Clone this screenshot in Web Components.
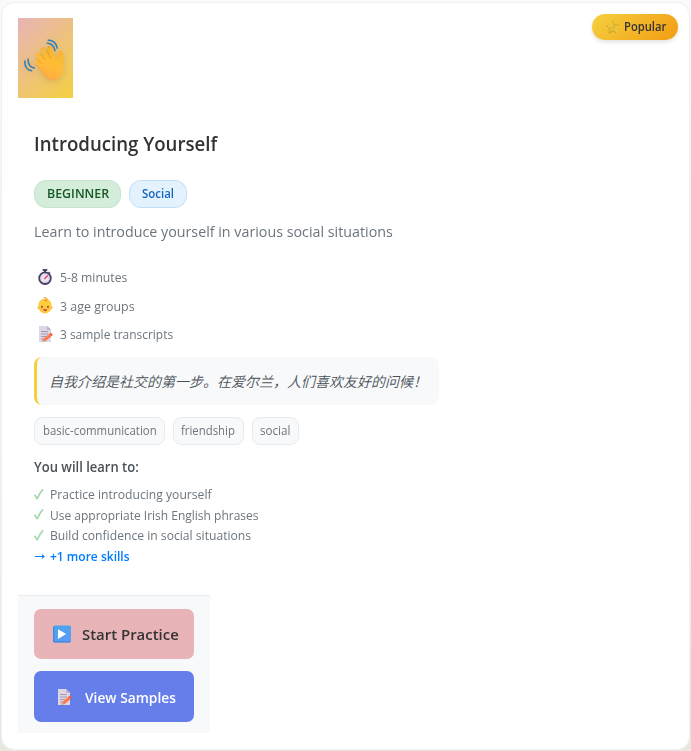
<!DOCTYPE html>
<html lang="en">
<head>
<meta charset="utf-8">
<title>Introducing Yourself</title>
<style>
html,body{margin:0;height:751px;overflow:hidden}
body{background:linear-gradient(#fafafa 0,#f7f5f2 25%,#f1eeea 75%,#e9e6e0 100%);font-family:"Open Sans","Noto Sans CJK SC",sans-serif;color:#6c757d}
</style>
</head>
<body>
<scenario-card></scenario-card>
<script>
/* Single-line label whose text is scaled horizontally to an exact width. */
class FitText extends HTMLElement {
  connectedCallback() {
    const w = +this.getAttribute('w');
    this.attachShadow({mode: 'open'}).innerHTML = `<style>
      :host{display:inline-block;white-space:nowrap;flex:none;width:${w}px}
      span{display:inline-block;transform-origin:0 50%}</style><span><slot></slot></span>`;
    const s = this.shadowRoot.querySelector('span');
    s.style.transform = `scaleX(${w / s.offsetWidth})`;
  }
}

const ICONS = {
  wave: [40, 42, `<defs><linearGradient id="g" x1=".7" y1="0" x2=".4" y2="1"><stop offset="0" stop-color="#f5b52e"/><stop offset=".5" stop-color="#ffbd35"/><stop offset="1" stop-color="#ffad43"/></linearGradient></defs>
    <g fill="none" stroke-linecap="round" stroke-width="4.4">
    <path stroke="#e9a22c" d="M13.6 22.5 22 31M14.4 15.8 24 27M19.2 10.6 27 24M25.4 9.4 30 22"/></g>
    <path fill="url(#g)" d="M11.7 24.1 C10 22.2 12.4 19.7 14.5 21.4 L17.3 24.2 12.5 17.4 C10.8 14.7 14.2 12.2 16.2 14.5 L21.3 21 17.5 12.4 C16.4 9.2 20.1 7.8 21.8 10.5 L26.7 19.1 24.3 11.5 C23.5 8.5 27 7.2 28.6 10.1 L32.4 19.4 C33.3 18.5 33.6 17 33.9 14.6 C34.3 11.3 39 11 39.2 14.6 C39.5 19 39.2 24 39.1 29 C39 35 36 39.7 31 40.6 C25.8 41.5 22.2 39 19 34.7Z"/>
    <path fill="none" stroke="#df962d" stroke-width="1" opacity=".75" d="M14.7 21.5 18 24.7M16.6 15.2 21.4 21.2M22.2 11.3 26.8 19.3"/>
    <path fill="none" stroke="#fb9650" stroke-width="1" opacity=".7" d="M12 24.8 19.5 34.2C23 39 27 41 32 39.7"/>
    <path fill="none" stroke="#2c7fb5" stroke-width="1.5" stroke-linecap="round" d="M.9 22C.6 27.500 3 31 7.600 31.800M4 20C4 25.600 6 28.500 10.400 29M24.300 1.300C29 1.100 32.500 4.500 33.300 9.100M23.300 4.300C27 4.200 29.800 7 31 11.500"/>`],
  star: [14, 14, `<path fill="#e6bd38" stroke="#cda02a" stroke-width=".8" d="M6.4 1 8.5 4.8 13 5.4 10 8.7 10.8 13 6.8 11.2 3 13.2 3.7 9 .8 6 5 5.1Z"/><path fill="none" stroke="#f6e04c" stroke-width="1" d="M6.4 1.8 5.4 5.4 2 6.2M10.6 12.5 9.8 8.6 12.4 5.7"/>`],
  watch: [14, 16, `<path fill="#51456a" d="M4.7 0h4.6v2.1H8v1.5H6V2.1H4.7zM11 2.5l1.6 1.5-1 1-1.5-1.4z"/><circle cx="7" cy="9.2" r="5.8" fill="#eee8f2" stroke="#493c60" stroke-width="1.8"/><path fill="none" stroke="#9d91af" stroke-width=".8" stroke-dasharray="1 1.7" d="M7 5.2a4 4 0 1 1-.1 0"/><path stroke="#e1417b" stroke-width="1.5" d="M6.3 10 10 6.3"/>`],
  baby: [16, 17, `<circle cx="2" cy="10.500" r="1.500" fill="#f5b12e"/><circle cx="14" cy="10.500" r="1.500" fill="#f5b12e"/><path fill="#ffca3b" d="M8 1.800c4.300 0 6.600 3 6.600 7.300 0 4.600-2.900 7.300-6.600 7.300s-6.600-2.700-6.600-7.300C1.400 4.800 3.700 1.800 8 1.800Z"/><path fill="none" stroke="#e99a2e" stroke-width="1.100" stroke-linecap="round" d="M7 .8C9 .3 10.600 2 9.500 3.400 8.900 4.200 7.700 3.900 7.800 3"/><path fill="#603d36" d="M4.200 9h1.700v1.600H4.200zm5.900 0h1.700v1.600h-1.700z"/><path fill="#ff9a5a" opacity=".6" d="M2.800 11h2.500v1.500H2.800zm8 0h2.500v1.500h-2.500z"/><path fill="#c63e42" d="M6 12.300h4.200q-.5 2-2.100 2T6 12.300"/>`],
  memo: [16, 17, `<path fill="#dcd6e5" d="M1 0h8.200L13 3.800V16H1z"/><path fill="#b6abc3" d="M9.200 0 13 3.800H9.200z"/><path stroke="#a69bb3" stroke-width="1" d="M3 5.500h7M3 8h7M3 10.500h5.500M3 13h3"/><path stroke="#fa7445" stroke-width="3.100" d="M6 14.200 12.300 9"/><path stroke="#fa583f" stroke-width="3.100" d="m12.200 9.100 1.700-1.400"/><path fill="#d6a078" d="m3.900 16 1-3 2.100 2.300z"/><path fill="none" stroke="#ffa15d" stroke-width=".8" d="m6 13.200 5.500-4.600"/>`],
  play: [18, 18, `<defs><linearGradient id="p" x2=".5" y2="1"><stop stop-color="#47a5ee"/><stop offset="1" stop-color="#5c9bf3"/></linearGradient></defs><rect x=".2" y=".4" width="17.800" height="17" rx="1.500" fill="url(#p)"/><path fill="none" stroke="#3c80cf" stroke-width="1" d="M.7 2v14.900H17"/><path fill="#fff" d="M5 4.200v9.700L13.200 9z"/>`],
  check: [10, 11, `<path fill="none" stroke="#a3d9ab" stroke-width="1.700" stroke-linecap="round" stroke-linejoin="round" d="M.9 6.300 3.200 9.700Q5.300 4.500 8.600.9"/>`],
  arrow: [11, 7, `<path fill="none" stroke="#007bff" stroke-width="1.100" d="M1 3.500h9M8 1.700 10 3.500 8 5.300"/>`]
};
class UiIcon extends HTMLElement {
  connectedCallback() {
    const [w, h, art] = ICONS[this.getAttribute('name')];
    this.attachShadow({mode: 'open'}).innerHTML = `<style>:host{display:block;flex:none;width:${w}px;height:${h}px}svg{display:block}</style>
      <svg width="${w}" height="${h}" viewBox="0 0 ${w} ${h}" aria-hidden="true">${art}</svg>`;
  }
}

class UiPill extends HTMLElement {
  connectedCallback() {
    this.attachShadow({mode: 'open'}).innerHTML = `<style>
    :host{display:flex;align-items:center;justify-content:center;box-sizing:border-box;height:28px;border:1px solid #e9ecef;border-radius:8px;background:#f8f9fa;font-size:12px;line-height:16px}
    :host([kind=level]){background:#d4edda;border-color:#c3e6cb;color:#155724;border-radius:12px;font-weight:600}
    :host([kind=topic]){background:#e3f2fd;border-color:#bbdefb;color:#1565c0;border-radius:12px;font-weight:550}
    </style><slot></slot>`;
  }
}

class MetaRow extends HTMLElement {
  connectedCallback() {
    this.attachShadow({mode: 'open'}).innerHTML = `<style>
    :host{display:flex;align-items:center;height:28.500px;font-size:13px;line-height:20px}
    i{display:flex;justify-content:center;width:21px;margin-right:5px}
    :host([icon=memo]) i{padding-left:1px;margin-right:4px}
    </style><i><ui-icon name="${this.getAttribute('icon')}"></ui-icon></i><slot></slot>`;
  }
}

class SkillRow extends HTMLElement {
  connectedCallback() {
    this.attachShadow({mode: 'open'}).innerHTML = `<style>
    :host{display:flex;align-items:center;height:20.600px;font-size:13px;line-height:20px}
    :host([more]){color:#007bff;font-weight:600}
    i{width:16px;flex:none}
    </style><i><ui-icon name="${this.hasAttribute('more') ? 'arrow' : 'check'}"></ui-icon></i><slot></slot>`;
  }
}

class ActionButton extends HTMLElement {
  connectedCallback() {
    this.attachShadow({mode: 'open'}).innerHTML = `<style>
    :host{display:block}
    button{display:flex;align-items:center;width:160px;height:50px;border:0;border-radius:7px;padding:0 0 0 19px;font:550 15px/20px "Open Sans",sans-serif;background:#e8b4b8;color:#333}
    ui-icon{margin-right:11px}
    :host([secondary]) button{height:51px;padding:3px 0 0 23px;background:#667eea;color:#fff;font-size:14px;font-weight:650}
    :host([secondary]) ui-icon{margin:-2px 12px 0 0}
    </style><button><ui-icon name="${this.getAttribute('icon')}"></ui-icon><slot></slot></button>`;
  }
}

class ScenarioCard extends HTMLElement {
  connectedCallback() {
    this.attachShadow({mode: 'open'}).innerHTML = `<style>
    :host{display:block;position:relative;box-sizing:border-box;width:689px;height:748px;margin:2px 0 0 1px;padding:15px 16px;border:1px solid #f0f0f0;border-radius:13px;background:#fff}
    .badge{position:absolute;right:11px;top:11px;display:flex;align-items:center;box-sizing:border-box;width:86px;height:26px;padding:0 0 0 14px;gap:4px;border-radius:13px;background:linear-gradient(135deg,#f4d03f,#f39c12);box-shadow:0 2px 4px rgba(0,0,0,.12);color:#333;font:600 12px/16px "Open Sans",sans-serif}
    .hero{display:flex;align-items:center;justify-content:center;box-sizing:border-box;width:55px;height:80px;padding:4px 3px 0 0;background:linear-gradient(135deg,#e8b4b8,#f4d03f)}
    .hero ui-icon{filter:drop-shadow(0 2px 3px rgba(0,0,0,.1))}
    .body{padding:33px 16px 0;height:464px}
    h3{margin:0;color:#333;font:600 20px/26px "Open Sans",sans-serif}
    .row{display:flex;gap:8px}
    .badges{margin-top:23px}
    p{margin:11px 0 0;font-size:15px;line-height:24px}
    .meta{margin:20px 0 8.500px}
    blockquote{margin:0;box-sizing:border-box;width:405px;height:48px;border-left:3px solid #f4d03f;border-radius:8px;background:#f8f9fa;padding:0 0 0 12px;display:flex;align-items:center;color:#495057;font:italic 350 14px/22px "Noto Sans CJK SC",sans-serif}
    .tags{margin-top:12px}
    h4{margin:12px 0 7px;color:#495057;font:600 13.500px/20px "Open Sans",sans-serif}
    .actions{box-sizing:border-box;width:192px;height:138px;border-top:1px solid #e9ecef;background:#f8f9fa;padding:13px 16px;display:grid;align-content:start;gap:12px}
    </style>
    <div class="badge"><ui-icon name="star"></ui-icon><fit-text w="42">Popular</fit-text></div>
    <div class="hero"><ui-icon name="wave"></ui-icon></div>
    <div class="body">
      <h3><fit-text w="183.500">Introducing Yourself</fit-text></h3>
      <div class="row badges"><ui-pill kind="level" style="width:87px"><fit-text w="62">BEGINNER</fit-text></ui-pill><ui-pill kind="topic" style="width:58px"><fit-text w="32.500">Social</fit-text></ui-pill></div>
      <p><fit-text w="358.800">Learn to introduce yourself in various social situations</fit-text></p>
      <div class="meta">
        <meta-row icon="watch"><fit-text w="67.500">5-8 minutes</fit-text></meta-row>
        <meta-row icon="baby"><fit-text w="74.500">3 age groups</fit-text></meta-row>
        <meta-row icon="memo"><fit-text w="113">3 sample transcripts</fit-text></meta-row>
      </div>
      <blockquote><fit-text w="378">自我介绍是社交的第一步。在爱尔兰，人们喜欢友好的问候！</fit-text></blockquote>
      <div class="row tags"><ui-pill style="width:131px"><fit-text w="114">basic-communication</fit-text></ui-pill><ui-pill style="width:70.500px"><fit-text w="54">friendship</fit-text></ui-pill><ui-pill style="width:47.500px"><fit-text w="30">social</fit-text></ui-pill></div>
      <h4><fit-text w="105">You will learn to:</fit-text></h4>
      <skill-row><fit-text w="161.500">Practice introducing yourself</fit-text></skill-row>
      <skill-row><fit-text w="208.500">Use appropriate Irish English phrases</fit-text></skill-row>
      <skill-row><fit-text w="200.800">Build confidence in social situations</fit-text></skill-row>
      <skill-row more><fit-text w="79.500">+1 more skills</fit-text></skill-row>
    </div>
    <div class="actions">
      <action-button icon="play"><fit-text w="96.500">Start Practice</fit-text></action-button>
      <action-button icon="memo" secondary><fit-text w="90.500">View Samples</fit-text></action-button>
    </div>`;
  }
}
customElements.define('fit-text', FitText);
customElements.define('ui-icon', UiIcon);
customElements.define('ui-pill', UiPill);
customElements.define('meta-row', MetaRow);
customElements.define('skill-row', SkillRow);
customElements.define('action-button', ActionButton);
customElements.define('scenario-card', ScenarioCard);
</script>
</body>
</html>
